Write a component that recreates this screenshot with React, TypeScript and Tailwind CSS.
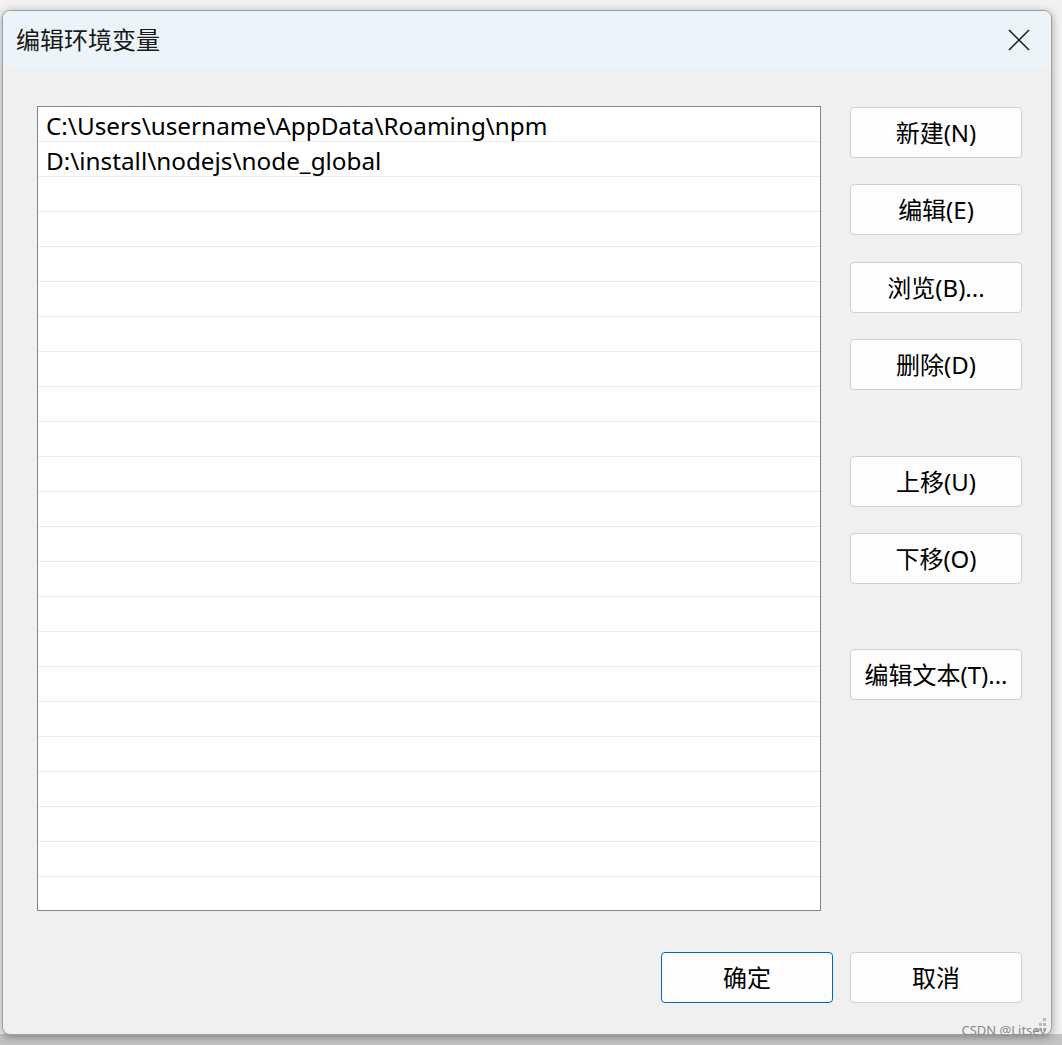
import React from "react";

const font = { fontFamily: '"Noto Sans", "Noto Sans CJK SC", sans-serif' };

const paths = [
  "C:\\Users\\username\\AppData\\Roaming\\npm",
  "D:\\install\\nodejs\\node_global",
];

const sideButtons = [
  { label: "新建(N)", gap: "mt-0" },
  { label: "编辑(E)", gap: "mt-[26px]" },
  { label: "浏览(B)...", gap: "mt-[27px]" },
  { label: "删除(D)", gap: "mt-[26px]" },
  { label: "上移(U)", gap: "mt-[66px]" },
  { label: "下移(O)", gap: "mt-[26px]" },
  { label: "编辑文本(T)...", gap: "mt-[65px]" },
];

const WinButton = ({ label, primary, className = "" }: { label: string; primary?: boolean; className?: string }) => (
  <div
    className={`w-[172px] h-[51px] flex items-center justify-center rounded-[4px] bg-[#fdfdfd] text-[24px] text-black border ${
      primary ? "border-[#0067c0]" : "border-[#d0d0d0]"
    } ${className}`}
  >
    {label}
  </div>
);

const App = () => {
  const rows = Array.from({ length: 24 }, (_, i) => paths[i] ?? "");

  return (
    <div
      className="w-[1062px] h-[1045px] overflow-hidden relative pt-[10px] pl-[2px] bg-[linear-gradient(to_bottom,#f1f1f1_1034px,#c3c3c3_1034px)]"
      style={font}
    >
      {/* dialog */}
      <div className="relative w-[1050px] h-[1025px] rounded-[8px] bg-[#f0f0f0] border border-[#a0a0a0] shadow-[0_2px_8px_rgba(0,0,0,0.35)] flex flex-col overflow-hidden">
        {/* title bar */}
        <div className="h-[57px] bg-[#edf4f9] flex items-center justify-between pl-[13px] pr-[21px]">
          <span className="text-[24px] text-[#1a1a1a] leading-none">编辑环境变量</span>
          <svg width="22" height="22" viewBox="0 0 22 22" className="mt-[1px]">
            <path d="M1 1 L21 21 M21 1 L1 21" stroke="#1a1a1a" strokeWidth="1.5" />
          </svg>
        </div>

        {/* body */}
        <div className="flex-1 flex flex-col pt-[38px] pl-[34px] pr-[29px]">
          <div className="flex gap-[29px]">
            <div className="w-[784px] h-[805px] bg-white border border-[#838388] overflow-hidden">
              {rows.map((p, i) => (
                <div
                  key={i}
                  className="h-[35px] border-b border-[#ececec] flex items-center pl-[8px] pt-[4px] text-[24.3px] text-black whitespace-nowrap"
                >
                  {p}
                </div>
              ))}
            </div>
            <div className="flex flex-col pt-[1px]">
              {sideButtons.map((b) => (
                <WinButton key={b.label} label={b.label} className={b.gap} />
              ))}
            </div>
          </div>

          <div className="mt-[41px] flex justify-end gap-[17px]">
            <WinButton label="确定" primary />
            <WinButton label="取消" />
          </div>
        </div>

        {/* resize grip */}
        <svg width="12" height="14" viewBox="0 0 12 14" className="absolute right-[4px] bottom-[2px]">
          <rect x="8" y="0" width="3" height="3" fill="#b8b8b8" />
          <rect x="4" y="5" width="3" height="3" fill="#b8b8b8" />
          <rect x="8" y="5" width="3" height="3" fill="#b8b8b8" />
          <rect x="0" y="10" width="3" height="3" fill="#b8b8b8" />
          <rect x="4" y="10" width="3" height="3" fill="#b8b8b8" />
          <rect x="8" y="10" width="3" height="3" fill="#b8b8b8" />
        </svg>
      </div>

      {/* watermark */}
      <span className="absolute right-[16px] bottom-[8px] text-[13px] leading-none text-[#8a8a8a]">CSDN @Litsev</span>
    </div>
  );
};

export default App;
